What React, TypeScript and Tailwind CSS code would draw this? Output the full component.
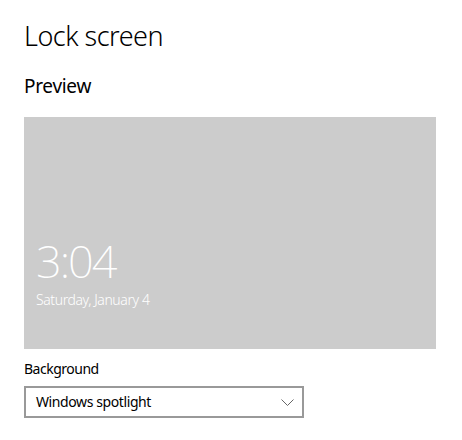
const FONT = "font-['Noto_Sans',sans-serif]";

export default function App() {
  return (
    <div className={`${FONT} h-[440px] w-[462px] bg-white px-6 pt-[18px] text-black`}>
      <h1 className="text-[27px] leading-[36px] font-light tracking-[-0.5px]">Lock screen</h1>
      <h2 className="mt-[18px] text-[19px] leading-[28px] tracking-[-0.3px]">Preview</h2>

      <div className="mt-[17px] flex h-[232px] w-[412px] flex-col justify-end bg-[#cccccc] px-3 pb-[39px] text-white">
        <div className="text-[45px] leading-[52px] font-extralight tracking-[-2px]">3:04</div>
        <div className="mt-[3px] text-[14px] leading-[20px] font-light tracking-[-0.4px]">
          Saturday, January 4
        </div>
      </div>

      <div className="mt-[10px] text-[14px] leading-[20px] tracking-[-0.5px]">Background</div>
      <button className="mt-[7px] flex h-[32px] w-[280px] items-center justify-between border-2 border-[#999999] bg-white pr-[8px] pl-[10px] text-left text-[14px] leading-[20px] tracking-[-0.4px]">
        <span>Windows spotlight</span>
        <svg width="13" height="7" viewBox="0 0 13 7" fill="none" stroke="#666666" strokeWidth="1">
          <path d="M0.5 0.5 L6.5 6.5 L12.5 0.5" />
        </svg>
      </button>
    </div>
  );
}
